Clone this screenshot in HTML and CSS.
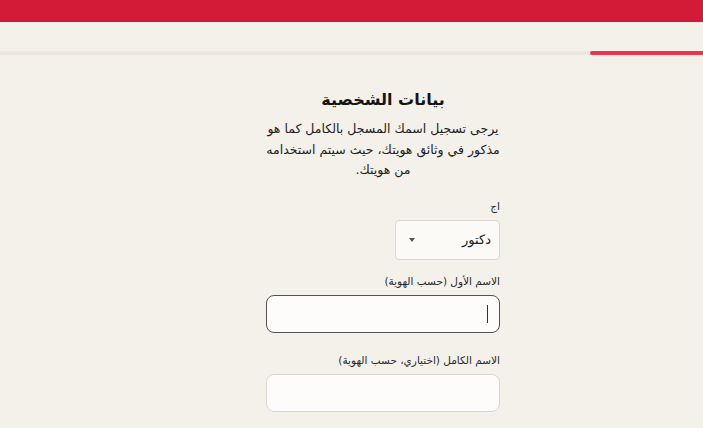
FILE: index.html
```html
<!DOCTYPE html>
<html lang="ar" dir="rtl">
<head>
<meta charset="utf-8">
<link rel="stylesheet" href="styles.css">
</head>
<body>
<header class="topbar"></header>
<div class="progress"><div class="progress-track"><div class="progress-fill"></div></div></div>
<main class="page">
  <section class="form">
    <h1 class="title">بيانات الشخصية</h1>
    <p class="intro">يرجى تسجيل اسمك المسجل بالكامل كما هو مذكور في وثائق هويتك، حيث سيتم استخدامه من هويتك.</p>
    <div class="field field-first">
      <label class="label">اج</label>
      <div class="select">
        <span class="select-value">دكتور</span>
        <span class="caret"></span>
      </div>
    </div>
    <div class="field">
      <label class="label">الاسم الأول (حسب الهوية)</label>
      <div class="input focused"><span class="cursor"></span></div>
    </div>
    <div class="field field-last">
      <label class="label">الاسم الكامل (اختياري، حسب الهوية)</label>
      <div class="input"></div>
    </div>
  </section>
</main>
</body>
</html>
```
FILE: styles.css
```css
html, body {
  margin: 0;
  padding: 0;
  background: #f4f1eb;
  font-family: "DejaVu Sans", "Noto Sans", sans-serif;
  color: #1a1a1a;
  height: 100%;
  overflow: hidden;
}
.topbar {
  height: 22px;
  background: #d31b38;
}
.progress {
  padding-top: 29px;
  height: 4px;
}
.progress-track {
  height: 4px;
  background: #ebe7e0;
  display: flex;
  justify-content: flex-start;
}
.progress-fill {
  width: 113px;
  height: 4px;
  background: #f0344b;
  border-radius: 2px 0 0 2px;
}
.page {
  display: flex;
  justify-content: center;
  padding-left: 63px;
}
.form {
  width: 234px;
  padding-top: 32px;
}
.title {
  margin: 0;
  text-align: center;
  font-size: 16px;
  font-weight: bold;
  line-height: 26px;
  color: #151515;
}
.intro {
  margin: 6px 0 0;
  text-align: center;
  font-size: 12.5px;
  line-height: 20.5px;
  color: #222;
}
.field {
  margin-top: 14px;
  display: flex;
  flex-direction: column;
  align-items: flex-start;
}
.field-first { margin-top: 18px; }
.field-last { margin-top: 20px; }
.label {
  font-size: 10.5px;
  line-height: 14px;
  color: #2a2a2a;
  margin-bottom: 7px;
}
.select {
  border: 1px solid #dcd8d1;
  border-radius: 4px;
  background: #fbfaf7;
  display: flex;
  align-items: center;
  justify-content: space-between;
  padding: 0 8px 0 13px;
  box-sizing: border-box;
  width: 105px;
  height: 40px;
}
.select-value {
  font-size: 13px;
  color: #222;
}
.caret {
  width: 0;
  height: 0;
  border-left: 3.5px solid transparent;
  border-right: 3.5px solid transparent;
  border-top: 4px solid #555;
}
.input {
  width: 234px;
  height: 38px;
  box-sizing: border-box;
  border: 1px solid #dcd8d1;
  border-radius: 8px;
  background: #fdfcfa;
  display: flex;
  align-items: center;
  padding-right: 11px;
}
.input.focused {
  border-color: #55534f;
}
.cursor {
  width: 1px;
  height: 18px;
  background: #333;
}
```
